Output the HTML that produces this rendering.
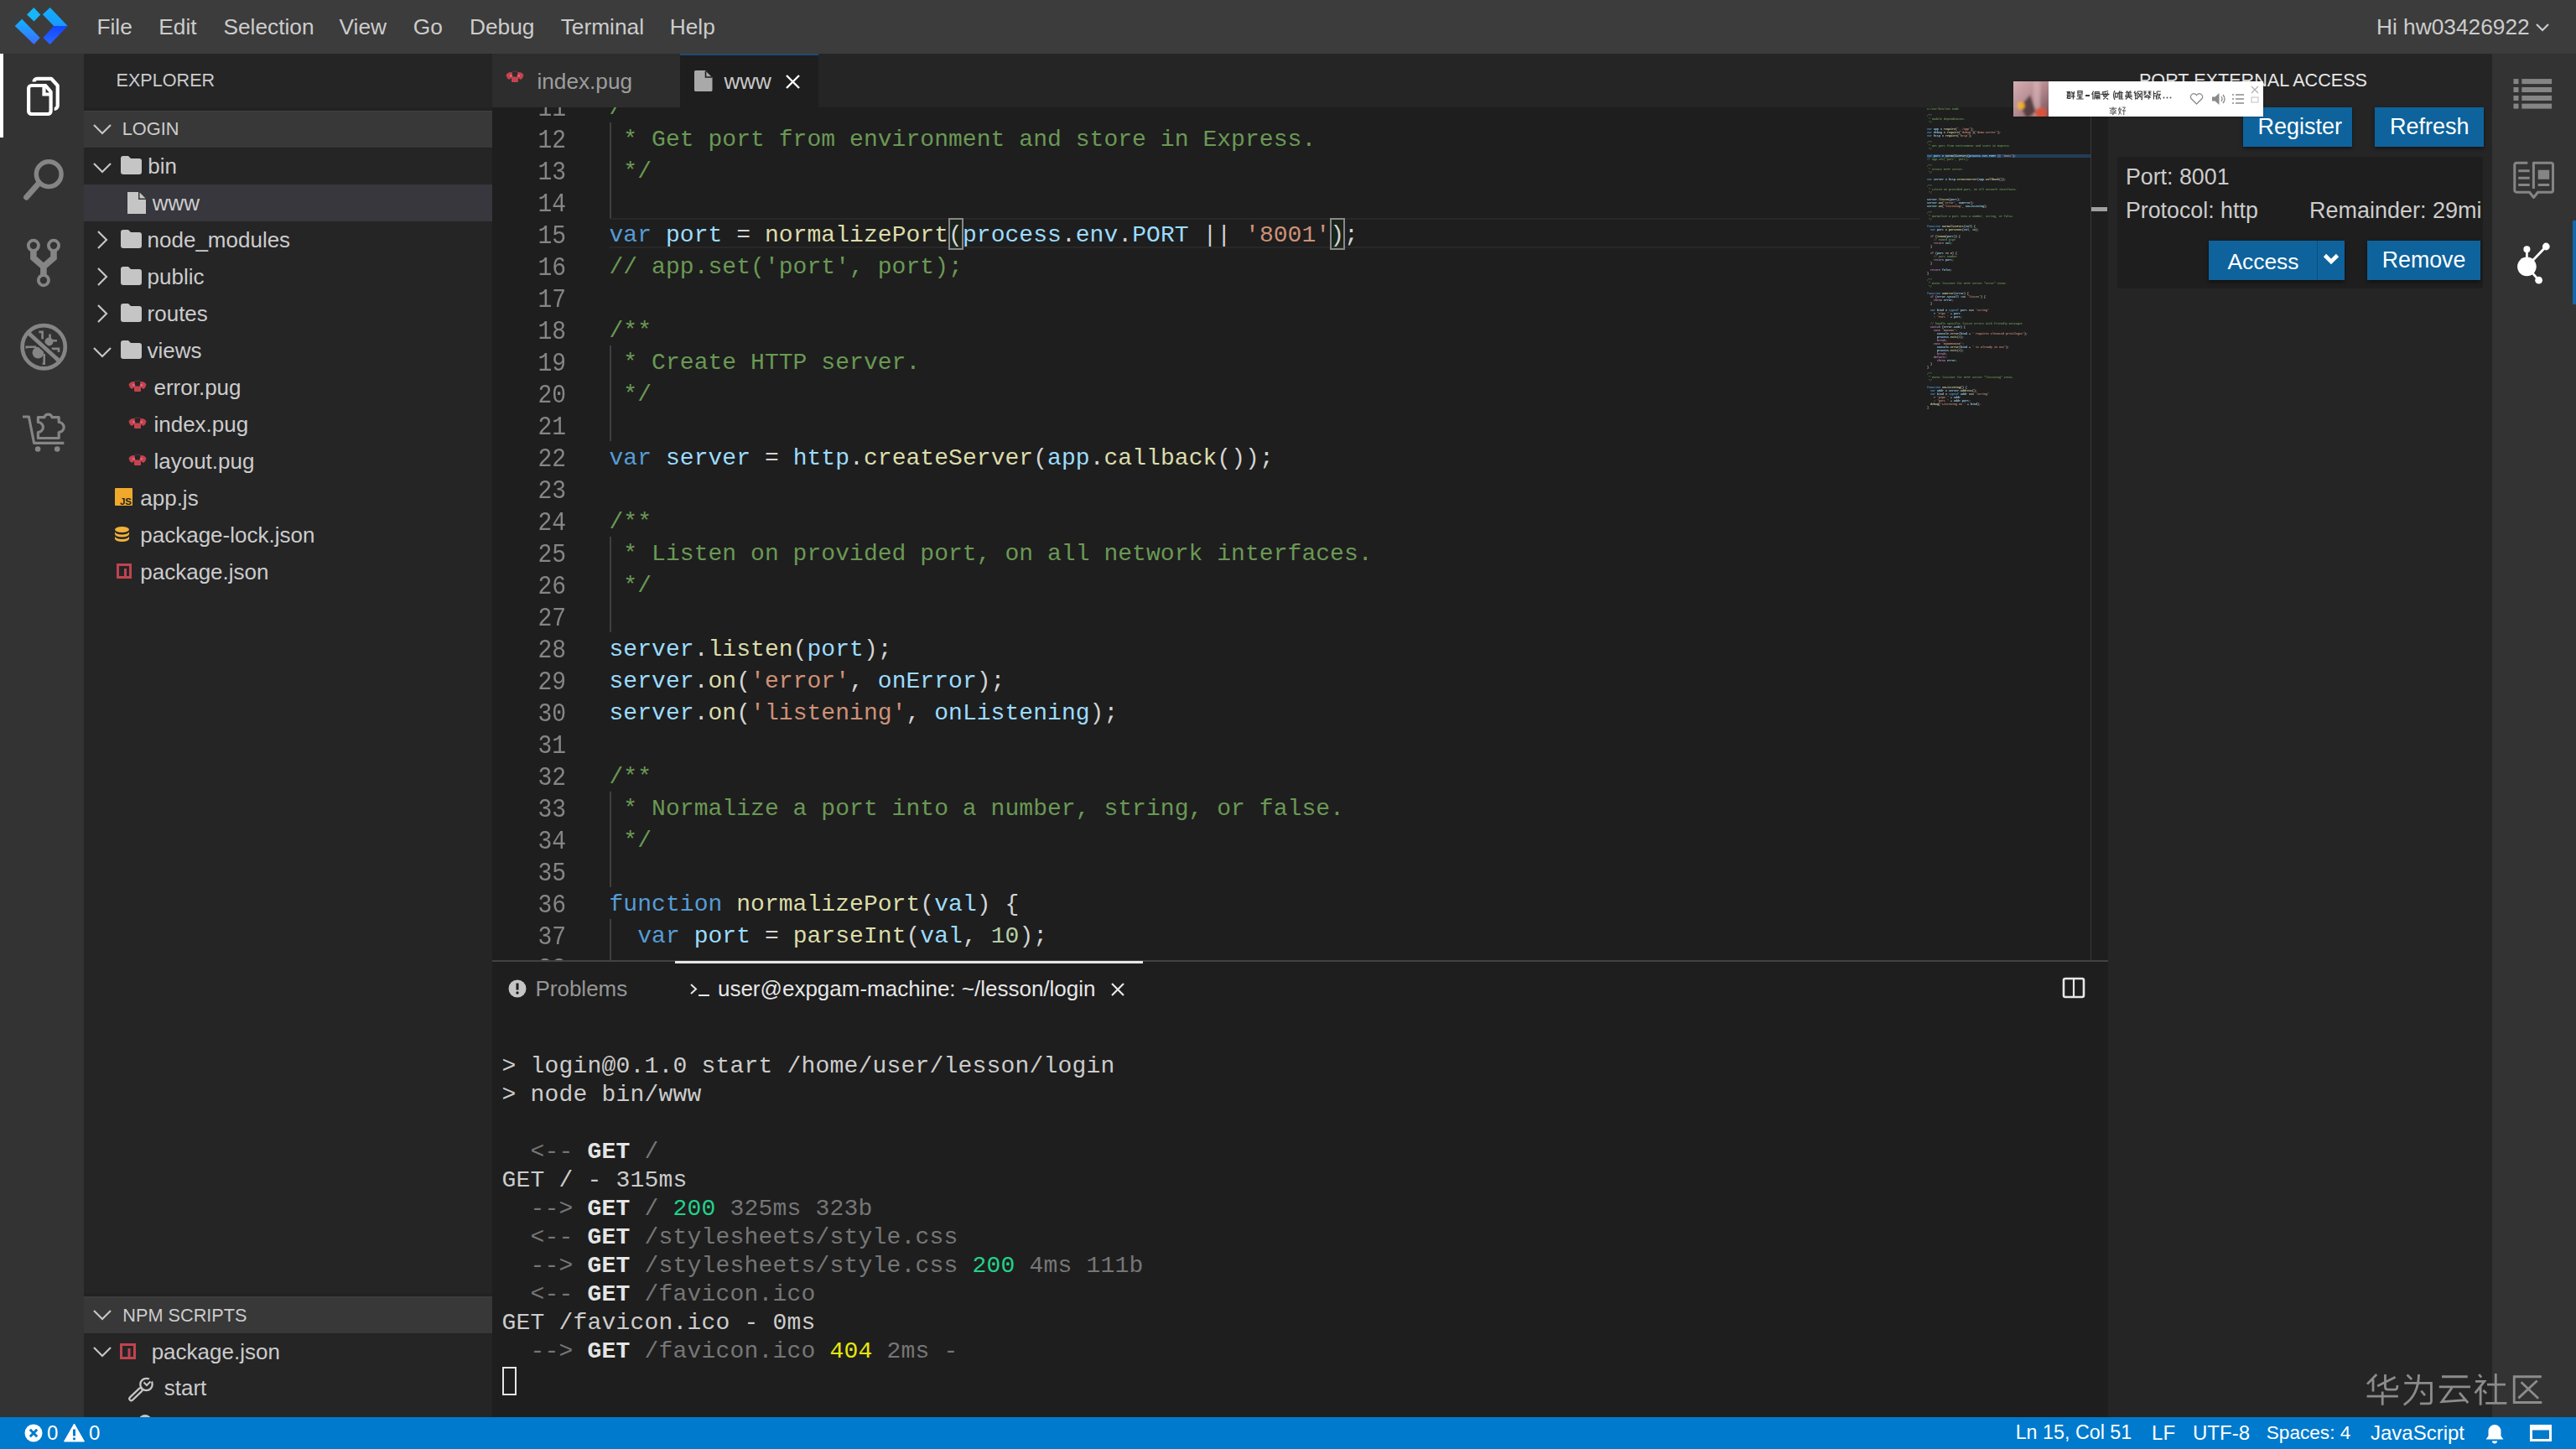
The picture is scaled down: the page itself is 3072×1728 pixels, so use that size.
<!DOCTYPE html><html><head><meta charset="utf-8"><style>
*{margin:0;padding:0;box-sizing:border-box}
html,body{width:3072px;height:1728px;overflow:hidden;background:#1e1e1e;font-family:"Liberation Sans",sans-serif}
.a{position:absolute}
.t{position:absolute;white-space:pre}
</style></head><body>
<div class="a" style="left:0px;top:0px;width:3072px;height:64px;background:#3c3c3c;"></div>
<div class="a" style="left:0px;top:64px;width:100px;height:1626px;background:#333333;"></div>
<div class="a" style="left:100px;top:64px;width:487px;height:1626px;background:#252526;"></div>
<div class="a" style="left:587px;top:64px;width:1927px;height:64px;background:#252526;"></div>
<div class="a" style="left:587px;top:128px;width:1927px;height:1017px;background:#1e1e1e;"></div>
<div class="a" style="left:587px;top:1145px;width:1927px;height:545px;background:#1e1e1e;"></div>
<div class="a" style="left:587px;top:1145px;width:1927px;height:2px;background:#414141;"></div>
<div class="a" style="left:2514px;top:64px;width:458px;height:1626px;background:#252526;"></div>
<div class="a" style="left:2972px;top:64px;width:100px;height:1626px;background:#333333;"></div>
<div class="a" style="left:0px;top:1690px;width:3072px;height:38px;background:#007acc;"></div>
<svg class="a" style="left:10px;top:4px;" width="80" height="56" viewBox="0 0 80 56">
<defs>
<linearGradient id="lg1" x1="0" y1="0" x2="0" y2="1"><stop offset="0" stop-color="#10b4ff"/><stop offset="1" stop-color="#3d6bff"/></linearGradient>
<linearGradient id="lg2" x1="0" y1="0" x2="0" y2="1"><stop offset="0" stop-color="#12b0ff"/><stop offset="0.5" stop-color="#1898ff"/><stop offset="0.5" stop-color="#1246ff"/><stop offset="1" stop-color="#2a68ff"/></linearGradient>
</defs>
<path d="M30.3 5 L38.3 13.4 L30.5 21.4 L22 13.5 Z" fill="#17b6fa"/>
<path d="M16.2 18.7 L7.7 27.1 L30.5 49.1 L37.7 41 Z" fill="url(#lg1)"/>
<path d="M49.7 5 L40.8 13.3 L54.1 27.1 L41.4 41 L49.5 49.1 L70.7 27.1 Z" fill="url(#lg2)"/>
</svg>
<div class="t" style="left:115.45px;top:19.24px;font-size:26.3px;line-height:26.3px;color:#cccccc;font-family:'Liberation Sans',sans-serif;">File</div>
<div class="t" style="left:189.25px;top:19.24px;font-size:26.3px;line-height:26.3px;color:#cccccc;font-family:'Liberation Sans',sans-serif;">Edit</div>
<div class="t" style="left:266.45px;top:19.24px;font-size:26.3px;line-height:26.3px;color:#cccccc;font-family:'Liberation Sans',sans-serif;">Selection</div>
<div class="t" style="left:404.55px;top:19.24px;font-size:26.3px;line-height:26.3px;color:#cccccc;font-family:'Liberation Sans',sans-serif;">View</div>
<div class="t" style="left:492.85px;top:19.24px;font-size:26.3px;line-height:26.3px;color:#cccccc;font-family:'Liberation Sans',sans-serif;">Go</div>
<div class="t" style="left:559.95px;top:19.24px;font-size:26.3px;line-height:26.3px;color:#cccccc;font-family:'Liberation Sans',sans-serif;">Debug</div>
<div class="t" style="left:668.65px;top:19.24px;font-size:26.3px;line-height:26.3px;color:#cccccc;font-family:'Liberation Sans',sans-serif;">Terminal</div>
<div class="t" style="left:798.75px;top:19.24px;font-size:26.3px;line-height:26.3px;color:#cccccc;font-family:'Liberation Sans',sans-serif;">Help</div>
<div class="t" style="left:2833.95px;top:19.24px;font-size:26.3px;line-height:26.3px;color:#cccccc;font-family:'Liberation Sans',sans-serif;">Hi hw03426922</div>
<svg class="a" style="left:3023px;top:26.5px;" width="18" height="12" viewBox="0 0 18 12"><path d="M2 2 L9 9 L16 2" stroke="#cccccc" stroke-width="2.2" fill="none"/></svg>
<div class="a" style="left:0px;top:64px;width:4px;height:100px;background:#ffffff;"></div>
<svg class="a" style="left:0px;top:64px;" width="100" height="500" viewBox="0 0 100 500"><g transform="translate(0,-64)">
<path d="M40.5 97.5 a3.7 3.7 0 0 1 3.7 -3.7 H61.1 L68.7 102 V126 a4 4 0 0 1 -4 4" stroke="#fff" stroke-width="4.2" fill="none" stroke-linejoin="round"/>
<path d="M54.3 102 H37.6 a3.5 3.5 0 0 0 -3.5 3.5 V132.5 a3.5 3.5 0 0 0 3.5 3.5 H57.1 a3.5 3.5 0 0 0 3.5 -3.5 V109.5 Z" stroke="#fff" stroke-width="4.2" fill="none" stroke-linejoin="round"/>
<path d="M52.5 103 V112.5 H59.5" stroke="#fff" stroke-width="4.2" fill="none"/>
<circle cx="58.2" cy="207.7" r="14.9" stroke="#858585" stroke-width="5.4" fill="none"/>
<path d="M45.4 219.5 L31.5 235.3" stroke="#858585" stroke-width="6.8" stroke-linecap="round"/>
<circle cx="39.9" cy="292.8" r="6.1" stroke="#858585" stroke-width="3.8" fill="none"/>
<circle cx="64" cy="292.8" r="6.1" stroke="#858585" stroke-width="3.8" fill="none"/>
<circle cx="51.9" cy="334.2" r="6.1" stroke="#858585" stroke-width="3.8" fill="none"/>
<path d="M39.9 298 V307.5 L51.9 318 L64 307.5 V298 M51.9 316 V329" stroke="#858585" stroke-width="7.6" fill="none" stroke-linejoin="miter"/>
<circle cx="52.2" cy="413.8" r="25.6" stroke="#858585" stroke-width="4.7" fill="none"/>
<path d="M33.8 397 L69.5 429.5" stroke="#858585" stroke-width="4.7"/>
<g transform="translate(16,376)">
<circle cx="29.4" cy="44.6" r="6.8" fill="#858585"/>
<circle cx="42.5" cy="31.5" r="5" fill="#858585"/>
<path d="M30.4 19.9 H34.6 V28.3 M43.5 22.5 V28.3 M45.6 30.2 H51.9 M45.6 39.9 H54 V44 M15.7 39.5 V37.8 H27.3 M36.7 46.1 V57.7 H34.6" stroke="#858585" stroke-width="2.6" fill="none"/>
<path d="M20.5 23.5 L51 51" stroke="#333333" stroke-width="9"/>
<path d="M17.8 21 L53.5 53.5" stroke="#858585" stroke-width="4.7"/>
</g>
<g transform="translate(16,476)">
<path d="M11 21 H18.4 L24.6 52.4 H60.3" stroke="#858585" stroke-width="3.1" fill="none" stroke-linejoin="round"/>
<circle cx="29.1" cy="59.5" r="3.3" fill="#858585"/>
<circle cx="52.2" cy="59.5" r="3.3" fill="#858585"/>
<path d="M29.4 21.7 H37 A4.6 4.6 0 0 1 46 21.7 H54.2 V27.5 A6 6 0 0 1 54.2 39.5 V46.5 H29.4 V39.5 A6 6 0 0 0 29.4 27.5 Z" stroke="#858585" stroke-width="3.2" fill="none" stroke-linejoin="round"/>
</g>
</g></svg>
<div class="t" style="left:138.54px;top:84.92px;font-size:21.6px;line-height:21.6px;color:#cccccc;font-family:'Liberation Sans',sans-serif;">EXPLORER</div>
<div class="a" style="left:100px;top:128px;width:487px;height:4px;background:#222222;"></div>
<div class="a" style="left:100px;top:132px;width:487px;height:44px;background:#383838;"></div>
<div class="a" style="left:100px;top:132px;width:487px;height:2px;background:#3c3c3c;"></div>
<div class="a" style="left:100px;top:176px;width:487px;height:1px;background:#222222;"></div>
<svg class="a" style="left:110px;top:146px;" width="24" height="16" viewBox="0 0 24 16"><path d="M2 3 L12 13 L22 3" stroke="#c5c5c5" stroke-width="2.2" fill="none"/></svg>
<div class="t" style="left:145.73px;top:142.95px;font-size:21.8px;line-height:21.8px;color:#cccccc;font-family:'Liberation Sans',sans-serif;">LOGIN</div>
<svg class="a" style="left:110px;top:192px;" width="24" height="16" viewBox="0 0 24 16"><path d="M2 3 L12 13 L22 3" stroke="#c5c5c5" stroke-width="2.2" fill="none"/></svg>
<svg class="a" style="left:144px;top:186px;" width="25" height="22" viewBox="0 0 25 22"><path d="M0 3 a3 3 0 0 1 3 -3 h6 l3 3 h10 a3 3 0 0 1 3 3 v13 a3 3 0 0 1 -3 3 h-19 a3 3 0 0 1 -3 -3 z" fill="#c5c5c5"/></svg>
<div class="t" style="left:176.36px;top:184.79px;font-size:26px;line-height:26px;color:#cccccc;font-family:'Liberation Sans',sans-serif;">bin</div>
<div class="a" style="left:100px;top:220px;width:487px;height:44px;background:#37373d;"></div>
<svg class="a" style="left:152px;top:229px;" width="22" height="26" viewBox="0 0 22 26"><path d="M0 0 H13 V9 H22 V26 H0 Z" fill="#c5c5c5"/><path d="M14.5 0.5 L21.5 7.5 H14.5 Z" fill="#c5c5c5"/></svg>
<div class="t" style="left:181.66px;top:228.79px;font-size:26px;line-height:26px;color:#cccccc;font-family:'Liberation Sans',sans-serif;">www</div>
<svg class="a" style="left:114px;top:274px;" width="16" height="24" viewBox="0 0 16 24"><path d="M3 2 L13 12 L3 22" stroke="#c5c5c5" stroke-width="2.2" fill="none"/></svg>
<svg class="a" style="left:144px;top:274px;" width="25" height="22" viewBox="0 0 25 22"><path d="M0 3 a3 3 0 0 1 3 -3 h6 l3 3 h10 a3 3 0 0 1 3 3 v13 a3 3 0 0 1 -3 3 h-19 a3 3 0 0 1 -3 -3 z" fill="#c5c5c5"/></svg>
<div class="t" style="left:175.56px;top:272.79px;font-size:26px;line-height:26px;color:#cccccc;font-family:'Liberation Sans',sans-serif;">node_modules</div>
<svg class="a" style="left:114px;top:318px;" width="16" height="24" viewBox="0 0 16 24"><path d="M3 2 L13 12 L3 22" stroke="#c5c5c5" stroke-width="2.2" fill="none"/></svg>
<svg class="a" style="left:144px;top:318px;" width="25" height="22" viewBox="0 0 25 22"><path d="M0 3 a3 3 0 0 1 3 -3 h6 l3 3 h10 a3 3 0 0 1 3 3 v13 a3 3 0 0 1 -3 3 h-19 a3 3 0 0 1 -3 -3 z" fill="#c5c5c5"/></svg>
<div class="t" style="left:175.56px;top:316.79px;font-size:26px;line-height:26px;color:#cccccc;font-family:'Liberation Sans',sans-serif;">public</div>
<svg class="a" style="left:114px;top:362px;" width="16" height="24" viewBox="0 0 16 24"><path d="M3 2 L13 12 L3 22" stroke="#c5c5c5" stroke-width="2.2" fill="none"/></svg>
<svg class="a" style="left:144px;top:362px;" width="25" height="22" viewBox="0 0 25 22"><path d="M0 3 a3 3 0 0 1 3 -3 h6 l3 3 h10 a3 3 0 0 1 3 3 v13 a3 3 0 0 1 -3 3 h-19 a3 3 0 0 1 -3 -3 z" fill="#c5c5c5"/></svg>
<div class="t" style="left:175.56px;top:360.79px;font-size:26px;line-height:26px;color:#cccccc;font-family:'Liberation Sans',sans-serif;">routes</div>
<svg class="a" style="left:110px;top:412px;" width="24" height="16" viewBox="0 0 24 16"><path d="M2 3 L12 13 L22 3" stroke="#c5c5c5" stroke-width="2.2" fill="none"/></svg>
<svg class="a" style="left:144px;top:406px;" width="25" height="22" viewBox="0 0 25 22"><path d="M0 3 a3 3 0 0 1 3 -3 h6 l3 3 h10 a3 3 0 0 1 3 3 v13 a3 3 0 0 1 -3 3 h-19 a3 3 0 0 1 -3 -3 z" fill="#c5c5c5"/></svg>
<div class="t" style="left:175.56px;top:404.79px;font-size:26px;line-height:26px;color:#cccccc;font-family:'Liberation Sans',sans-serif;">views</div>
<svg class="a" style="left:148px;top:448px;" width="32" height="24" viewBox="0 0 32 24"><g fill="#c5434f"><path d="M5.5 10.5 Q7.5 6.5 12.5 7 L13.5 13 L9 16 Q6 14 5.5 10.5 Z"/><path d="M26.5 10.5 Q24.5 6.5 19.5 7 L18.5 13 L23 16 Q26 14 26.5 10.5 Z"/><rect x="12" y="12.5" width="8" height="6.5" rx="1"/><path d="M12.5 6.2 H19.5" stroke="#c5434f" stroke-width="0.8" opacity="0.5"/></g>
<circle cx="11.3" cy="11.3" r="1.3" fill="#e07080"/><circle cx="20.7" cy="11.3" r="1.3" fill="#e07080"/></svg>
<div class="t" style="left:183.46px;top:448.79px;font-size:26px;line-height:26px;color:#cccccc;font-family:'Liberation Sans',sans-serif;">error.pug</div>
<svg class="a" style="left:148px;top:492px;" width="32" height="24" viewBox="0 0 32 24"><g fill="#c5434f"><path d="M5.5 10.5 Q7.5 6.5 12.5 7 L13.5 13 L9 16 Q6 14 5.5 10.5 Z"/><path d="M26.5 10.5 Q24.5 6.5 19.5 7 L18.5 13 L23 16 Q26 14 26.5 10.5 Z"/><rect x="12" y="12.5" width="8" height="6.5" rx="1"/><path d="M12.5 6.2 H19.5" stroke="#c5434f" stroke-width="0.8" opacity="0.5"/></g>
<circle cx="11.3" cy="11.3" r="1.3" fill="#e07080"/><circle cx="20.7" cy="11.3" r="1.3" fill="#e07080"/></svg>
<div class="t" style="left:183.46px;top:492.79px;font-size:26px;line-height:26px;color:#cccccc;font-family:'Liberation Sans',sans-serif;">index.pug</div>
<svg class="a" style="left:148px;top:536px;" width="32" height="24" viewBox="0 0 32 24"><g fill="#c5434f"><path d="M5.5 10.5 Q7.5 6.5 12.5 7 L13.5 13 L9 16 Q6 14 5.5 10.5 Z"/><path d="M26.5 10.5 Q24.5 6.5 19.5 7 L18.5 13 L23 16 Q26 14 26.5 10.5 Z"/><rect x="12" y="12.5" width="8" height="6.5" rx="1"/><path d="M12.5 6.2 H19.5" stroke="#c5434f" stroke-width="0.8" opacity="0.5"/></g>
<circle cx="11.3" cy="11.3" r="1.3" fill="#e07080"/><circle cx="20.7" cy="11.3" r="1.3" fill="#e07080"/></svg>
<div class="t" style="left:183.46px;top:536.79px;font-size:26px;line-height:26px;color:#cccccc;font-family:'Liberation Sans',sans-serif;">layout.pug</div>
<svg class="a" style="left:137px;top:582px;" width="22" height="22" viewBox="0 0 22 22"><rect width="21" height="21" rx="1" fill="#f1a92c"/><text x="20" y="19.5" font-family="Liberation Sans" font-size="11.5" font-weight="bold" fill="#1f1f1f" text-anchor="end">JS</text></svg>
<div class="t" style="left:167.26px;top:580.79px;font-size:26px;line-height:26px;color:#cccccc;font-family:'Liberation Sans',sans-serif;">app.js</div>
<svg class="a" style="left:137px;top:628px;" width="17" height="20" viewBox="0 0 17 20"><ellipse cx="8.5" cy="3.5" rx="8.5" ry="3.5" fill="#f0b23b"/><path d="M0 6 v3 a8.5 3.5 0 0 0 17 0 v-3 a8.5 3.5 0 0 1 -17 0z M0 11.5 v3 a8.5 3.5 0 0 0 17 0 v-3 a8.5 3.5 0 0 1 -17 0z" fill="#f0b23b"/></svg>
<div class="t" style="left:167.26px;top:624.79px;font-size:26px;line-height:26px;color:#cccccc;font-family:'Liberation Sans',sans-serif;">package-lock.json</div>
<svg class="a" style="left:139px;top:672px;" width="18" height="18" viewBox="0 0 18 18"><path d="M0 0 h18 v18 h-18z M3 3 v12 h6 v-9 h3 v9 h3 v-12z" fill="#c0434f" fill-rule="evenodd"/></svg>
<div class="t" style="left:167.26px;top:668.79px;font-size:26px;line-height:26px;color:#cccccc;font-family:'Liberation Sans',sans-serif;">package.json</div>
<div class="a" style="left:100px;top:1542px;width:487px;height:4px;background:#222222;"></div>
<div class="a" style="left:100px;top:1546px;width:487px;height:44px;background:#383838;"></div>
<div class="a" style="left:100px;top:1546px;width:487px;height:2px;background:#3c3c3c;"></div>
<div class="a" style="left:100px;top:1590px;width:487px;height:1px;background:#222222;"></div>
<svg class="a" style="left:110px;top:1560px;" width="24" height="16" viewBox="0 0 24 16"><path d="M2 3 L12 13 L22 3" stroke="#c5c5c5" stroke-width="2.2" fill="none"/></svg>
<div class="t" style="left:146.33px;top:1557.63px;font-size:21.7px;line-height:21.7px;color:#cccccc;font-family:'Liberation Sans',sans-serif;">NPM SCRIPTS</div>
<svg class="a" style="left:110px;top:1604px;" width="24" height="16" viewBox="0 0 24 16"><path d="M2 3 L12 13 L22 3" stroke="#c5c5c5" stroke-width="2.2" fill="none"/></svg>
<svg class="a" style="left:143px;top:1602px;" width="19" height="19" viewBox="0 0 19 19"><path d="M0 0 h19 v19 h-19z M3 3 v13 h6.5 v-10 h3 v10 h3.5 v-13z" fill="#c0434f" fill-rule="evenodd"/></svg>
<div class="t" style="left:180.66px;top:1598.99px;font-size:26px;line-height:26px;color:#cccccc;font-family:'Liberation Sans',sans-serif;">package.json</div>
<svg class="a" style="left:150px;top:1638px;" width="34" height="36" viewBox="0 0 34 36"><g transform="translate(-150,-1638)">
<path d="M167.5 1657.5 L156.5 1668" stroke="#c5c5c5" stroke-width="6.6" stroke-linecap="round"/>
<path d="M167.5 1657.5 L156.5 1668" stroke="#252526" stroke-width="2.2" stroke-linecap="round"/>
<circle cx="174.5" cy="1651" r="7.2" stroke="#c5c5c5" stroke-width="2.3" fill="#252526"/>
<path d="M174.5 1651 L183 1642.5" stroke="#252526" stroke-width="4.2"/>
<path d="M171.5 1648.5 L175 1652 L179.5 1647.5" stroke="#c5c5c5" stroke-width="2" fill="none"/>
</g></svg>
<div class="t" style="left:195.76px;top:1641.99px;font-size:26px;line-height:26px;color:#cccccc;font-family:'Liberation Sans',sans-serif;">start</div>
<svg class="a" style="left:160px;top:1684px;" width="30" height="6" viewBox="0 0 30 6"><circle cx="13" cy="11" r="8" fill="#c5c5c5"/></svg>
<div class="a" style="left:587px;top:64px;width:224px;height:64px;background:#2d2d2d;"></div>
<div class="a" style="left:811px;top:64px;width:165px;height:64px;background:#1e1e1e;"></div>
<div class="a" style="left:811px;top:64px;width:165px;height:2px;background:#1e4b72;"></div>
<svg class="a" style="left:598px;top:79px;" width="32" height="24" viewBox="0 0 32 24"><g fill="#c5434f"><path d="M5.5 10.5 Q7.5 6.5 12.5 7 L13.5 13 L9 16 Q6 14 5.5 10.5 Z"/><path d="M26.5 10.5 Q24.5 6.5 19.5 7 L18.5 13 L23 16 Q26 14 26.5 10.5 Z"/><rect x="12" y="12.5" width="8" height="6.5" rx="1"/><path d="M12.5 6.2 H19.5" stroke="#c5434f" stroke-width="0.8" opacity="0.5"/></g>
<circle cx="11.3" cy="11.3" r="1.3" fill="#e07080"/><circle cx="20.7" cy="11.3" r="1.3" fill="#e07080"/></svg>
<div class="t" style="left:640.45px;top:83.82px;font-size:26.2px;line-height:26.2px;color:#9d9d9d;font-family:'Liberation Sans',sans-serif;">index.pug</div>
<svg class="a" style="left:828px;top:84px;" width="22" height="25" viewBox="0 0 22 25"><path d="M0 1.5 a1.5 1.5 0 0 1 1.5 -1.5 H13 L21.5 8.5 V23.5 a1.5 1.5 0 0 1 -1.5 1.5 H1.5 a1.5 1.5 0 0 1 -1.5 -1.5 Z" fill="#a9a9a9"/><path d="M13.5 1 V8 H21" stroke="#1e1e1e" stroke-width="1.6" fill="none"/></svg>
<div class="t" style="left:863.46px;top:83.59px;font-size:26px;line-height:26px;color:#c8c8c8;font-family:'Liberation Sans',sans-serif;">www</div>
<svg class="a" style="left:936px;top:88px;" width="19" height="19" viewBox="0 0 19 19"><path d="M2 2 L17 17 M17 2 L2 17" stroke="#ffffff" stroke-width="2.4"/></svg>
<div class="a" style="left:587px;top:128px;width:1907px;height:1017px;overflow:hidden">
<div class="a" style="left:140px;top:132px;width:1563px;height:36px;border-top:2px solid #282828;border-bottom:2px solid #282828"></div>
<div class="a" style="left:140px;top:18px;width:2px;height:38px;background:#404040"></div>
<div class="a" style="left:140px;top:56px;width:2px;height:38px;background:#404040"></div>
<div class="a" style="left:140px;top:94px;width:2px;height:38px;background:#404040"></div>
<div class="a" style="left:140px;top:284px;width:2px;height:38px;background:#404040"></div>
<div class="a" style="left:140px;top:322px;width:2px;height:38px;background:#404040"></div>
<div class="a" style="left:140px;top:360px;width:2px;height:38px;background:#404040"></div>
<div class="a" style="left:140px;top:512px;width:2px;height:38px;background:#404040"></div>
<div class="a" style="left:140px;top:550px;width:2px;height:38px;background:#404040"></div>
<div class="a" style="left:140px;top:588px;width:2px;height:38px;background:#404040"></div>
<div class="a" style="left:140px;top:816px;width:2px;height:38px;background:#404040"></div>
<div class="a" style="left:140px;top:854px;width:2px;height:38px;background:#404040"></div>
<div class="a" style="left:140px;top:892px;width:2px;height:38px;background:#404040"></div>
<div class="a" style="left:140px;top:968px;width:2px;height:38px;background:#404040"></div>
<div class="a" style="left:140px;top:1006px;width:2px;height:38px;background:#404040"></div>
<div class="a" style="left:544.0px;top:132px;width:18px;height:38px;border:2px solid #888888;background:rgba(0,100,0,0.1)"></div>
<div class="a" style="left:999.1px;top:132px;width:18px;height:38px;border:2px solid #888888;background:rgba(0,100,0,0.1)"></div>
<div class="t" style="left:13px;width:75px;text-align:right;top:-10.95px;font:28px/28px 'Liberation Mono',monospace;color:#858585;transform:scaleY(1.14);transform-origin:50% 21.45px">11</div>
<div class="t" style="left:139.5px;top:-12.95px;font:28px/28px 'Liberation Mono',monospace;letter-spacing:0.052px"><span style="color:#6a9955">/**</span></div>
<div class="t" style="left:13px;width:75px;text-align:right;top:27.05px;font:28px/28px 'Liberation Mono',monospace;color:#858585;transform:scaleY(1.14);transform-origin:50% 21.45px">12</div>
<div class="t" style="left:139.5px;top:25.05px;font:28px/28px 'Liberation Mono',monospace;letter-spacing:0.052px"><span style="color:#6a9955"> * Get port from environment and store in Express.</span></div>
<div class="t" style="left:13px;width:75px;text-align:right;top:65.05px;font:28px/28px 'Liberation Mono',monospace;color:#858585;transform:scaleY(1.14);transform-origin:50% 21.45px">13</div>
<div class="t" style="left:139.5px;top:63.05px;font:28px/28px 'Liberation Mono',monospace;letter-spacing:0.052px"><span style="color:#6a9955"> */</span></div>
<div class="t" style="left:13px;width:75px;text-align:right;top:103.05px;font:28px/28px 'Liberation Mono',monospace;color:#858585;transform:scaleY(1.14);transform-origin:50% 21.45px">14</div>
<div class="t" style="left:13px;width:75px;text-align:right;top:141.05px;font:28px/28px 'Liberation Mono',monospace;color:#858585;transform:scaleY(1.14);transform-origin:50% 21.45px">15</div>
<div class="t" style="left:139.5px;top:139.05px;font:28px/28px 'Liberation Mono',monospace;letter-spacing:0.052px"><span style="color:#569cd6">var</span><span style="color:#d4d4d4"> </span><span style="color:#9cdcfe">port</span><span style="color:#d4d4d4"> = </span><span style="color:#dcdcaa">normalizePort</span><span style="color:#d4d4d4">(</span><span style="color:#9cdcfe">process</span><span style="color:#d4d4d4">.</span><span style="color:#9cdcfe">env</span><span style="color:#d4d4d4">.</span><span style="color:#9cdcfe">PORT</span><span style="color:#d4d4d4"> || </span><span style="color:#ce9178">&#x27;8001&#x27;</span><span style="color:#d4d4d4">);</span></div>
<div class="t" style="left:13px;width:75px;text-align:right;top:179.05px;font:28px/28px 'Liberation Mono',monospace;color:#858585;transform:scaleY(1.14);transform-origin:50% 21.45px">16</div>
<div class="t" style="left:139.5px;top:177.05px;font:28px/28px 'Liberation Mono',monospace;letter-spacing:0.052px"><span style="color:#6a9955">// app.set(&#x27;port&#x27;, port);</span></div>
<div class="t" style="left:13px;width:75px;text-align:right;top:217.05px;font:28px/28px 'Liberation Mono',monospace;color:#858585;transform:scaleY(1.14);transform-origin:50% 21.45px">17</div>
<div class="t" style="left:13px;width:75px;text-align:right;top:255.05px;font:28px/28px 'Liberation Mono',monospace;color:#858585;transform:scaleY(1.14);transform-origin:50% 21.45px">18</div>
<div class="t" style="left:139.5px;top:253.05px;font:28px/28px 'Liberation Mono',monospace;letter-spacing:0.052px"><span style="color:#6a9955">/**</span></div>
<div class="t" style="left:13px;width:75px;text-align:right;top:293.05px;font:28px/28px 'Liberation Mono',monospace;color:#858585;transform:scaleY(1.14);transform-origin:50% 21.45px">19</div>
<div class="t" style="left:139.5px;top:291.05px;font:28px/28px 'Liberation Mono',monospace;letter-spacing:0.052px"><span style="color:#6a9955"> * Create HTTP server.</span></div>
<div class="t" style="left:13px;width:75px;text-align:right;top:331.05px;font:28px/28px 'Liberation Mono',monospace;color:#858585;transform:scaleY(1.14);transform-origin:50% 21.45px">20</div>
<div class="t" style="left:139.5px;top:329.05px;font:28px/28px 'Liberation Mono',monospace;letter-spacing:0.052px"><span style="color:#6a9955"> */</span></div>
<div class="t" style="left:13px;width:75px;text-align:right;top:369.05px;font:28px/28px 'Liberation Mono',monospace;color:#858585;transform:scaleY(1.14);transform-origin:50% 21.45px">21</div>
<div class="t" style="left:13px;width:75px;text-align:right;top:407.05px;font:28px/28px 'Liberation Mono',monospace;color:#858585;transform:scaleY(1.14);transform-origin:50% 21.45px">22</div>
<div class="t" style="left:139.5px;top:405.05px;font:28px/28px 'Liberation Mono',monospace;letter-spacing:0.052px"><span style="color:#569cd6">var</span><span style="color:#d4d4d4"> </span><span style="color:#9cdcfe">server</span><span style="color:#d4d4d4"> = </span><span style="color:#9cdcfe">http</span><span style="color:#d4d4d4">.</span><span style="color:#dcdcaa">createServer</span><span style="color:#d4d4d4">(</span><span style="color:#9cdcfe">app</span><span style="color:#d4d4d4">.</span><span style="color:#dcdcaa">callback</span><span style="color:#d4d4d4">());</span></div>
<div class="t" style="left:13px;width:75px;text-align:right;top:445.05px;font:28px/28px 'Liberation Mono',monospace;color:#858585;transform:scaleY(1.14);transform-origin:50% 21.45px">23</div>
<div class="t" style="left:13px;width:75px;text-align:right;top:483.05px;font:28px/28px 'Liberation Mono',monospace;color:#858585;transform:scaleY(1.14);transform-origin:50% 21.45px">24</div>
<div class="t" style="left:139.5px;top:481.05px;font:28px/28px 'Liberation Mono',monospace;letter-spacing:0.052px"><span style="color:#6a9955">/**</span></div>
<div class="t" style="left:13px;width:75px;text-align:right;top:521.05px;font:28px/28px 'Liberation Mono',monospace;color:#858585;transform:scaleY(1.14);transform-origin:50% 21.45px">25</div>
<div class="t" style="left:139.5px;top:519.05px;font:28px/28px 'Liberation Mono',monospace;letter-spacing:0.052px"><span style="color:#6a9955"> * Listen on provided port, on all network interfaces.</span></div>
<div class="t" style="left:13px;width:75px;text-align:right;top:559.05px;font:28px/28px 'Liberation Mono',monospace;color:#858585;transform:scaleY(1.14);transform-origin:50% 21.45px">26</div>
<div class="t" style="left:139.5px;top:557.05px;font:28px/28px 'Liberation Mono',monospace;letter-spacing:0.052px"><span style="color:#6a9955"> */</span></div>
<div class="t" style="left:13px;width:75px;text-align:right;top:597.05px;font:28px/28px 'Liberation Mono',monospace;color:#858585;transform:scaleY(1.14);transform-origin:50% 21.45px">27</div>
<div class="t" style="left:13px;width:75px;text-align:right;top:635.05px;font:28px/28px 'Liberation Mono',monospace;color:#858585;transform:scaleY(1.14);transform-origin:50% 21.45px">28</div>
<div class="t" style="left:139.5px;top:633.05px;font:28px/28px 'Liberation Mono',monospace;letter-spacing:0.052px"><span style="color:#9cdcfe">server</span><span style="color:#d4d4d4">.</span><span style="color:#dcdcaa">listen</span><span style="color:#d4d4d4">(</span><span style="color:#9cdcfe">port</span><span style="color:#d4d4d4">);</span></div>
<div class="t" style="left:13px;width:75px;text-align:right;top:673.05px;font:28px/28px 'Liberation Mono',monospace;color:#858585;transform:scaleY(1.14);transform-origin:50% 21.45px">29</div>
<div class="t" style="left:139.5px;top:671.05px;font:28px/28px 'Liberation Mono',monospace;letter-spacing:0.052px"><span style="color:#9cdcfe">server</span><span style="color:#d4d4d4">.</span><span style="color:#dcdcaa">on</span><span style="color:#d4d4d4">(</span><span style="color:#ce9178">&#x27;error&#x27;</span><span style="color:#d4d4d4">, </span><span style="color:#9cdcfe">onError</span><span style="color:#d4d4d4">);</span></div>
<div class="t" style="left:13px;width:75px;text-align:right;top:711.05px;font:28px/28px 'Liberation Mono',monospace;color:#858585;transform:scaleY(1.14);transform-origin:50% 21.45px">30</div>
<div class="t" style="left:139.5px;top:709.05px;font:28px/28px 'Liberation Mono',monospace;letter-spacing:0.052px"><span style="color:#9cdcfe">server</span><span style="color:#d4d4d4">.</span><span style="color:#dcdcaa">on</span><span style="color:#d4d4d4">(</span><span style="color:#ce9178">&#x27;listening&#x27;</span><span style="color:#d4d4d4">, </span><span style="color:#9cdcfe">onListening</span><span style="color:#d4d4d4">);</span></div>
<div class="t" style="left:13px;width:75px;text-align:right;top:749.05px;font:28px/28px 'Liberation Mono',monospace;color:#858585;transform:scaleY(1.14);transform-origin:50% 21.45px">31</div>
<div class="t" style="left:13px;width:75px;text-align:right;top:787.05px;font:28px/28px 'Liberation Mono',monospace;color:#858585;transform:scaleY(1.14);transform-origin:50% 21.45px">32</div>
<div class="t" style="left:139.5px;top:785.05px;font:28px/28px 'Liberation Mono',monospace;letter-spacing:0.052px"><span style="color:#6a9955">/**</span></div>
<div class="t" style="left:13px;width:75px;text-align:right;top:825.05px;font:28px/28px 'Liberation Mono',monospace;color:#858585;transform:scaleY(1.14);transform-origin:50% 21.45px">33</div>
<div class="t" style="left:139.5px;top:823.05px;font:28px/28px 'Liberation Mono',monospace;letter-spacing:0.052px"><span style="color:#6a9955"> * Normalize a port into a number, string, or false.</span></div>
<div class="t" style="left:13px;width:75px;text-align:right;top:863.05px;font:28px/28px 'Liberation Mono',monospace;color:#858585;transform:scaleY(1.14);transform-origin:50% 21.45px">34</div>
<div class="t" style="left:139.5px;top:861.05px;font:28px/28px 'Liberation Mono',monospace;letter-spacing:0.052px"><span style="color:#6a9955"> */</span></div>
<div class="t" style="left:13px;width:75px;text-align:right;top:901.05px;font:28px/28px 'Liberation Mono',monospace;color:#858585;transform:scaleY(1.14);transform-origin:50% 21.45px">35</div>
<div class="t" style="left:13px;width:75px;text-align:right;top:939.05px;font:28px/28px 'Liberation Mono',monospace;color:#858585;transform:scaleY(1.14);transform-origin:50% 21.45px">36</div>
<div class="t" style="left:139.5px;top:937.05px;font:28px/28px 'Liberation Mono',monospace;letter-spacing:0.052px"><span style="color:#569cd6">function</span><span style="color:#d4d4d4"> </span><span style="color:#dcdcaa">normalizePort</span><span style="color:#d4d4d4">(</span><span style="color:#9cdcfe">val</span><span style="color:#d4d4d4">) {</span></div>
<div class="t" style="left:13px;width:75px;text-align:right;top:977.05px;font:28px/28px 'Liberation Mono',monospace;color:#858585;transform:scaleY(1.14);transform-origin:50% 21.45px">37</div>
<div class="t" style="left:139.5px;top:975.05px;font:28px/28px 'Liberation Mono',monospace;letter-spacing:0.052px"><span style="color:#d4d4d4">  </span><span style="color:#569cd6">var</span><span style="color:#d4d4d4"> </span><span style="color:#9cdcfe">port</span><span style="color:#d4d4d4"> = </span><span style="color:#dcdcaa">parseInt</span><span style="color:#d4d4d4">(</span><span style="color:#9cdcfe">val</span><span style="color:#d4d4d4">, </span><span style="color:#b5cea8">10</span><span style="color:#d4d4d4">);</span></div>
<div class="t" style="left:13px;width:75px;text-align:right;top:1015.05px;font:28px/28px 'Liberation Mono',monospace;color:#858585;transform:scaleY(1.14);transform-origin:50% 21.45px">38</div>
</div>
<div class="a" style="left:2298px;top:184px;width:196px;height:4px;background:rgba(38,79,120,0.65);"></div>
<div class="a" style="left:2298px;top:128px;width:196px;height:370px;overflow:hidden">
<div class="t" style="left:0;top:-0.5px;font:bold 3.334px/4px 'Liberation Mono',monospace;opacity:0.9"><span style="color:#6a9955">#!/usr/bin/env node</span></div>
<div class="t" style="left:0;top:7.5px;font:bold 3.334px/4px 'Liberation Mono',monospace;opacity:0.9"><span style="color:#6a9955">/**</span></div>
<div class="t" style="left:0;top:11.5px;font:bold 3.334px/4px 'Liberation Mono',monospace;opacity:0.9"> <span style="color:#6a9955">* Module dependencies.</span></div>
<div class="t" style="left:0;top:15.5px;font:bold 3.334px/4px 'Liberation Mono',monospace;opacity:0.9"> <span style="color:#6a9955">*/</span></div>
<div class="t" style="left:0;top:23.5px;font:bold 3.334px/4px 'Liberation Mono',monospace;opacity:0.9"><span style="color:#569cd6">var</span> <span style="color:#9cdcfe">app</span> <span style="color:#d4d4d4">=</span> <span style="color:#dcdcaa">require</span><span style="color:#d4d4d4">(</span><span style="color:#ce9178">&#x27;../app&#x27;</span><span style="color:#d4d4d4">)</span><span style="color:#d4d4d4">;</span></div>
<div class="t" style="left:0;top:27.5px;font:bold 3.334px/4px 'Liberation Mono',monospace;opacity:0.9"><span style="color:#569cd6">var</span> <span style="color:#9cdcfe">debug</span> <span style="color:#d4d4d4">=</span> <span style="color:#dcdcaa">require</span><span style="color:#d4d4d4">(</span><span style="color:#ce9178">&#x27;debug&#x27;</span><span style="color:#d4d4d4">)</span><span style="color:#d4d4d4">(</span><span style="color:#ce9178">&#x27;demo:server&#x27;</span><span style="color:#d4d4d4">)</span><span style="color:#d4d4d4">;</span></div>
<div class="t" style="left:0;top:31.5px;font:bold 3.334px/4px 'Liberation Mono',monospace;opacity:0.9"><span style="color:#569cd6">var</span> <span style="color:#9cdcfe">http</span> <span style="color:#d4d4d4">=</span> <span style="color:#dcdcaa">require</span><span style="color:#d4d4d4">(</span><span style="color:#ce9178">&#x27;http&#x27;</span><span style="color:#d4d4d4">)</span><span style="color:#d4d4d4">;</span></div>
<div class="t" style="left:0;top:39.5px;font:bold 3.334px/4px 'Liberation Mono',monospace;opacity:0.9"><span style="color:#6a9955">/**</span></div>
<div class="t" style="left:0;top:43.5px;font:bold 3.334px/4px 'Liberation Mono',monospace;opacity:0.9"> <span style="color:#6a9955">* Get port from environment and store in Express.</span></div>
<div class="t" style="left:0;top:47.5px;font:bold 3.334px/4px 'Liberation Mono',monospace;opacity:0.9"> <span style="color:#6a9955">*/</span></div>
<div class="t" style="left:0;top:55.5px;font:bold 3.334px/4px 'Liberation Mono',monospace;opacity:0.9"><span style="color:#569cd6">var</span> <span style="color:#9cdcfe">port</span> <span style="color:#d4d4d4">=</span> <span style="color:#dcdcaa">normalizePort</span><span style="color:#d4d4d4">(</span><span style="color:#9cdcfe">process</span><span style="color:#d4d4d4">.</span><span style="color:#9cdcfe">env</span><span style="color:#d4d4d4">.</span><span style="color:#9cdcfe">PORT</span> <span style="color:#d4d4d4">|</span><span style="color:#d4d4d4">|</span> <span style="color:#ce9178">&#x27;8001&#x27;</span><span style="color:#d4d4d4">)</span><span style="color:#d4d4d4">;</span></div>
<div class="t" style="left:0;top:59.5px;font:bold 3.334px/4px 'Liberation Mono',monospace;opacity:0.9"><span style="color:#6a9955">// app.set(&#x27;port&#x27;, port);</span></div>
<div class="t" style="left:0;top:67.5px;font:bold 3.334px/4px 'Liberation Mono',monospace;opacity:0.9"><span style="color:#6a9955">/**</span></div>
<div class="t" style="left:0;top:71.5px;font:bold 3.334px/4px 'Liberation Mono',monospace;opacity:0.9"> <span style="color:#6a9955">* Create HTTP server.</span></div>
<div class="t" style="left:0;top:75.5px;font:bold 3.334px/4px 'Liberation Mono',monospace;opacity:0.9"> <span style="color:#6a9955">*/</span></div>
<div class="t" style="left:0;top:83.5px;font:bold 3.334px/4px 'Liberation Mono',monospace;opacity:0.9"><span style="color:#569cd6">var</span> <span style="color:#9cdcfe">server</span> <span style="color:#d4d4d4">=</span> <span style="color:#9cdcfe">http</span><span style="color:#d4d4d4">.</span><span style="color:#dcdcaa">createServer</span><span style="color:#d4d4d4">(</span><span style="color:#9cdcfe">app</span><span style="color:#d4d4d4">.</span><span style="color:#dcdcaa">callback</span><span style="color:#d4d4d4">(</span><span style="color:#d4d4d4">)</span><span style="color:#d4d4d4">)</span><span style="color:#d4d4d4">;</span></div>
<div class="t" style="left:0;top:91.5px;font:bold 3.334px/4px 'Liberation Mono',monospace;opacity:0.9"><span style="color:#6a9955">/**</span></div>
<div class="t" style="left:0;top:95.5px;font:bold 3.334px/4px 'Liberation Mono',monospace;opacity:0.9"> <span style="color:#6a9955">* Listen on provided port, on all network interfaces.</span></div>
<div class="t" style="left:0;top:99.5px;font:bold 3.334px/4px 'Liberation Mono',monospace;opacity:0.9"> <span style="color:#6a9955">*/</span></div>
<div class="t" style="left:0;top:107.5px;font:bold 3.334px/4px 'Liberation Mono',monospace;opacity:0.9"><span style="color:#9cdcfe">server</span><span style="color:#d4d4d4">.</span><span style="color:#dcdcaa">listen</span><span style="color:#d4d4d4">(</span><span style="color:#9cdcfe">port</span><span style="color:#d4d4d4">)</span><span style="color:#d4d4d4">;</span></div>
<div class="t" style="left:0;top:111.5px;font:bold 3.334px/4px 'Liberation Mono',monospace;opacity:0.9"><span style="color:#9cdcfe">server</span><span style="color:#d4d4d4">.</span><span style="color:#dcdcaa">on</span><span style="color:#d4d4d4">(</span><span style="color:#ce9178">&#x27;error&#x27;</span><span style="color:#d4d4d4">,</span> <span style="color:#9cdcfe">onError</span><span style="color:#d4d4d4">)</span><span style="color:#d4d4d4">;</span></div>
<div class="t" style="left:0;top:115.5px;font:bold 3.334px/4px 'Liberation Mono',monospace;opacity:0.9"><span style="color:#9cdcfe">server</span><span style="color:#d4d4d4">.</span><span style="color:#dcdcaa">on</span><span style="color:#d4d4d4">(</span><span style="color:#ce9178">&#x27;listening&#x27;</span><span style="color:#d4d4d4">,</span> <span style="color:#9cdcfe">onListening</span><span style="color:#d4d4d4">)</span><span style="color:#d4d4d4">;</span></div>
<div class="t" style="left:0;top:123.5px;font:bold 3.334px/4px 'Liberation Mono',monospace;opacity:0.9"><span style="color:#6a9955">/**</span></div>
<div class="t" style="left:0;top:127.5px;font:bold 3.334px/4px 'Liberation Mono',monospace;opacity:0.9"> <span style="color:#6a9955">* Normalize a port into a number, string, or false.</span></div>
<div class="t" style="left:0;top:131.5px;font:bold 3.334px/4px 'Liberation Mono',monospace;opacity:0.9"> <span style="color:#6a9955">*/</span></div>
<div class="t" style="left:0;top:139.5px;font:bold 3.334px/4px 'Liberation Mono',monospace;opacity:0.9"><span style="color:#569cd6">function</span> <span style="color:#dcdcaa">normalizePort</span><span style="color:#d4d4d4">(</span><span style="color:#9cdcfe">val</span><span style="color:#d4d4d4">)</span> <span style="color:#d4d4d4">{</span></div>
<div class="t" style="left:0;top:143.5px;font:bold 3.334px/4px 'Liberation Mono',monospace;opacity:0.9">  <span style="color:#569cd6">var</span> <span style="color:#9cdcfe">port</span> <span style="color:#d4d4d4">=</span> <span style="color:#dcdcaa">parseInt</span><span style="color:#d4d4d4">(</span><span style="color:#9cdcfe">val</span><span style="color:#d4d4d4">,</span> <span style="color:#b5cea8">10</span><span style="color:#d4d4d4">)</span><span style="color:#d4d4d4">;</span></div>
<div class="t" style="left:0;top:151.5px;font:bold 3.334px/4px 'Liberation Mono',monospace;opacity:0.9">  <span style="color:#c586c0">if</span> <span style="color:#d4d4d4">(</span><span style="color:#dcdcaa">isNaN</span><span style="color:#d4d4d4">(</span><span style="color:#9cdcfe">port</span><span style="color:#d4d4d4">)</span><span style="color:#d4d4d4">)</span> <span style="color:#d4d4d4">{</span></div>
<div class="t" style="left:0;top:155.5px;font:bold 3.334px/4px 'Liberation Mono',monospace;opacity:0.9">    <span style="color:#6a9955">// named pipe</span></div>
<div class="t" style="left:0;top:159.5px;font:bold 3.334px/4px 'Liberation Mono',monospace;opacity:0.9">    <span style="color:#c586c0">return</span> <span style="color:#9cdcfe">val</span><span style="color:#d4d4d4">;</span></div>
<div class="t" style="left:0;top:163.5px;font:bold 3.334px/4px 'Liberation Mono',monospace;opacity:0.9">  <span style="color:#d4d4d4">}</span></div>
<div class="t" style="left:0;top:171.5px;font:bold 3.334px/4px 'Liberation Mono',monospace;opacity:0.9">  <span style="color:#c586c0">if</span> <span style="color:#d4d4d4">(</span><span style="color:#9cdcfe">port</span> <span style="color:#d4d4d4">&gt;</span><span style="color:#d4d4d4">=</span> <span style="color:#b5cea8">0</span><span style="color:#d4d4d4">)</span> <span style="color:#d4d4d4">{</span></div>
<div class="t" style="left:0;top:175.5px;font:bold 3.334px/4px 'Liberation Mono',monospace;opacity:0.9">    <span style="color:#6a9955">// port number</span></div>
<div class="t" style="left:0;top:179.5px;font:bold 3.334px/4px 'Liberation Mono',monospace;opacity:0.9">    <span style="color:#c586c0">return</span> <span style="color:#9cdcfe">port</span><span style="color:#d4d4d4">;</span></div>
<div class="t" style="left:0;top:183.5px;font:bold 3.334px/4px 'Liberation Mono',monospace;opacity:0.9">  <span style="color:#d4d4d4">}</span></div>
<div class="t" style="left:0;top:191.5px;font:bold 3.334px/4px 'Liberation Mono',monospace;opacity:0.9">  <span style="color:#c586c0">return</span> <span style="color:#9cdcfe">false</span><span style="color:#d4d4d4">;</span></div>
<div class="t" style="left:0;top:195.5px;font:bold 3.334px/4px 'Liberation Mono',monospace;opacity:0.9"><span style="color:#d4d4d4">}</span></div>
<div class="t" style="left:0;top:203.5px;font:bold 3.334px/4px 'Liberation Mono',monospace;opacity:0.9"><span style="color:#6a9955">/**</span></div>
<div class="t" style="left:0;top:207.5px;font:bold 3.334px/4px 'Liberation Mono',monospace;opacity:0.9"> <span style="color:#6a9955">* Event listener for HTTP server &quot;error&quot; event.</span></div>
<div class="t" style="left:0;top:211.5px;font:bold 3.334px/4px 'Liberation Mono',monospace;opacity:0.9"> <span style="color:#6a9955">*/</span></div>
<div class="t" style="left:0;top:219.5px;font:bold 3.334px/4px 'Liberation Mono',monospace;opacity:0.9"><span style="color:#569cd6">function</span> <span style="color:#dcdcaa">onError</span><span style="color:#d4d4d4">(</span><span style="color:#9cdcfe">error</span><span style="color:#d4d4d4">)</span> <span style="color:#d4d4d4">{</span></div>
<div class="t" style="left:0;top:223.5px;font:bold 3.334px/4px 'Liberation Mono',monospace;opacity:0.9">  <span style="color:#c586c0">if</span> <span style="color:#d4d4d4">(</span><span style="color:#9cdcfe">error</span><span style="color:#d4d4d4">.</span><span style="color:#9cdcfe">syscall</span> <span style="color:#d4d4d4">!</span><span style="color:#d4d4d4">=</span><span style="color:#d4d4d4">=</span> <span style="color:#ce9178">&#x27;listen&#x27;</span><span style="color:#d4d4d4">)</span> <span style="color:#d4d4d4">{</span></div>
<div class="t" style="left:0;top:227.5px;font:bold 3.334px/4px 'Liberation Mono',monospace;opacity:0.9">    <span style="color:#c586c0">throw</span> <span style="color:#9cdcfe">error</span><span style="color:#d4d4d4">;</span></div>
<div class="t" style="left:0;top:231.5px;font:bold 3.334px/4px 'Liberation Mono',monospace;opacity:0.9">  <span style="color:#d4d4d4">}</span></div>
<div class="t" style="left:0;top:239.5px;font:bold 3.334px/4px 'Liberation Mono',monospace;opacity:0.9">  <span style="color:#569cd6">var</span> <span style="color:#9cdcfe">bind</span> <span style="color:#d4d4d4">=</span> <span style="color:#569cd6">typeof</span> <span style="color:#9cdcfe">port</span> <span style="color:#d4d4d4">=</span><span style="color:#d4d4d4">=</span><span style="color:#d4d4d4">=</span> <span style="color:#ce9178">&#x27;string&#x27;</span></div>
<div class="t" style="left:0;top:243.5px;font:bold 3.334px/4px 'Liberation Mono',monospace;opacity:0.9">    <span style="color:#d4d4d4">?</span> <span style="color:#ce9178">&#x27;Pipe &#x27;</span> <span style="color:#d4d4d4">+</span> <span style="color:#9cdcfe">port</span></div>
<div class="t" style="left:0;top:247.5px;font:bold 3.334px/4px 'Liberation Mono',monospace;opacity:0.9">    <span style="color:#d4d4d4">:</span> <span style="color:#ce9178">&#x27;Port &#x27;</span> <span style="color:#d4d4d4">+</span> <span style="color:#9cdcfe">port</span><span style="color:#d4d4d4">;</span></div>
<div class="t" style="left:0;top:255.5px;font:bold 3.334px/4px 'Liberation Mono',monospace;opacity:0.9">  <span style="color:#6a9955">// handle specific listen errors with friendly messages</span></div>
<div class="t" style="left:0;top:259.5px;font:bold 3.334px/4px 'Liberation Mono',monospace;opacity:0.9">  <span style="color:#c586c0">switch</span> <span style="color:#d4d4d4">(</span><span style="color:#9cdcfe">error</span><span style="color:#d4d4d4">.</span><span style="color:#9cdcfe">code</span><span style="color:#d4d4d4">)</span> <span style="color:#d4d4d4">{</span></div>
<div class="t" style="left:0;top:263.5px;font:bold 3.334px/4px 'Liberation Mono',monospace;opacity:0.9">    <span style="color:#c586c0">case</span> <span style="color:#ce9178">&#x27;EACCES&#x27;</span><span style="color:#d4d4d4">:</span></div>
<div class="t" style="left:0;top:267.5px;font:bold 3.334px/4px 'Liberation Mono',monospace;opacity:0.9">      <span style="color:#9cdcfe">console</span><span style="color:#d4d4d4">.</span><span style="color:#dcdcaa">error</span><span style="color:#d4d4d4">(</span><span style="color:#9cdcfe">bind</span> <span style="color:#d4d4d4">+</span> <span style="color:#ce9178">&#x27; requires elevated privileges&#x27;</span><span style="color:#d4d4d4">)</span><span style="color:#d4d4d4">;</span></div>
<div class="t" style="left:0;top:271.5px;font:bold 3.334px/4px 'Liberation Mono',monospace;opacity:0.9">      <span style="color:#9cdcfe">process</span><span style="color:#d4d4d4">.</span><span style="color:#dcdcaa">exit</span><span style="color:#d4d4d4">(</span><span style="color:#b5cea8">1</span><span style="color:#d4d4d4">)</span><span style="color:#d4d4d4">;</span></div>
<div class="t" style="left:0;top:275.5px;font:bold 3.334px/4px 'Liberation Mono',monospace;opacity:0.9">      <span style="color:#c586c0">break</span><span style="color:#d4d4d4">;</span></div>
<div class="t" style="left:0;top:279.5px;font:bold 3.334px/4px 'Liberation Mono',monospace;opacity:0.9">    <span style="color:#c586c0">case</span> <span style="color:#ce9178">&#x27;EADDRINUSE&#x27;</span><span style="color:#d4d4d4">:</span></div>
<div class="t" style="left:0;top:283.5px;font:bold 3.334px/4px 'Liberation Mono',monospace;opacity:0.9">      <span style="color:#9cdcfe">console</span><span style="color:#d4d4d4">.</span><span style="color:#dcdcaa">error</span><span style="color:#d4d4d4">(</span><span style="color:#9cdcfe">bind</span> <span style="color:#d4d4d4">+</span> <span style="color:#ce9178">&#x27; is already in use&#x27;</span><span style="color:#d4d4d4">)</span><span style="color:#d4d4d4">;</span></div>
<div class="t" style="left:0;top:287.5px;font:bold 3.334px/4px 'Liberation Mono',monospace;opacity:0.9">      <span style="color:#9cdcfe">process</span><span style="color:#d4d4d4">.</span><span style="color:#dcdcaa">exit</span><span style="color:#d4d4d4">(</span><span style="color:#b5cea8">1</span><span style="color:#d4d4d4">)</span><span style="color:#d4d4d4">;</span></div>
<div class="t" style="left:0;top:291.5px;font:bold 3.334px/4px 'Liberation Mono',monospace;opacity:0.9">      <span style="color:#c586c0">break</span><span style="color:#d4d4d4">;</span></div>
<div class="t" style="left:0;top:295.5px;font:bold 3.334px/4px 'Liberation Mono',monospace;opacity:0.9">    <span style="color:#c586c0">default</span><span style="color:#d4d4d4">:</span></div>
<div class="t" style="left:0;top:299.5px;font:bold 3.334px/4px 'Liberation Mono',monospace;opacity:0.9">      <span style="color:#c586c0">throw</span> <span style="color:#9cdcfe">error</span><span style="color:#d4d4d4">;</span></div>
<div class="t" style="left:0;top:303.5px;font:bold 3.334px/4px 'Liberation Mono',monospace;opacity:0.9">  <span style="color:#d4d4d4">}</span></div>
<div class="t" style="left:0;top:307.5px;font:bold 3.334px/4px 'Liberation Mono',monospace;opacity:0.9"><span style="color:#d4d4d4">}</span></div>
<div class="t" style="left:0;top:315.5px;font:bold 3.334px/4px 'Liberation Mono',monospace;opacity:0.9"><span style="color:#6a9955">/**</span></div>
<div class="t" style="left:0;top:319.5px;font:bold 3.334px/4px 'Liberation Mono',monospace;opacity:0.9"> <span style="color:#6a9955">* Event listener for HTTP server &quot;listening&quot; event.</span></div>
<div class="t" style="left:0;top:323.5px;font:bold 3.334px/4px 'Liberation Mono',monospace;opacity:0.9"> <span style="color:#6a9955">*/</span></div>
<div class="t" style="left:0;top:331.5px;font:bold 3.334px/4px 'Liberation Mono',monospace;opacity:0.9"><span style="color:#569cd6">function</span> <span style="color:#dcdcaa">onListening</span><span style="color:#d4d4d4">(</span><span style="color:#d4d4d4">)</span> <span style="color:#d4d4d4">{</span></div>
<div class="t" style="left:0;top:335.5px;font:bold 3.334px/4px 'Liberation Mono',monospace;opacity:0.9">  <span style="color:#569cd6">var</span> <span style="color:#9cdcfe">addr</span> <span style="color:#d4d4d4">=</span> <span style="color:#9cdcfe">server</span><span style="color:#d4d4d4">.</span><span style="color:#dcdcaa">address</span><span style="color:#d4d4d4">(</span><span style="color:#d4d4d4">)</span><span style="color:#d4d4d4">;</span></div>
<div class="t" style="left:0;top:339.5px;font:bold 3.334px/4px 'Liberation Mono',monospace;opacity:0.9">  <span style="color:#569cd6">var</span> <span style="color:#9cdcfe">bind</span> <span style="color:#d4d4d4">=</span> <span style="color:#569cd6">typeof</span> <span style="color:#9cdcfe">addr</span> <span style="color:#d4d4d4">=</span><span style="color:#d4d4d4">=</span><span style="color:#d4d4d4">=</span> <span style="color:#ce9178">&#x27;string&#x27;</span></div>
<div class="t" style="left:0;top:343.5px;font:bold 3.334px/4px 'Liberation Mono',monospace;opacity:0.9">    <span style="color:#d4d4d4">?</span> <span style="color:#ce9178">&#x27;pipe &#x27;</span> <span style="color:#d4d4d4">+</span> <span style="color:#9cdcfe">addr</span></div>
<div class="t" style="left:0;top:347.5px;font:bold 3.334px/4px 'Liberation Mono',monospace;opacity:0.9">    <span style="color:#d4d4d4">:</span> <span style="color:#ce9178">&#x27;port &#x27;</span> <span style="color:#d4d4d4">+</span> <span style="color:#9cdcfe">addr</span><span style="color:#d4d4d4">.</span><span style="color:#9cdcfe">port</span><span style="color:#d4d4d4">;</span></div>
<div class="t" style="left:0;top:351.5px;font:bold 3.334px/4px 'Liberation Mono',monospace;opacity:0.9">  <span style="color:#dcdcaa">debug</span><span style="color:#d4d4d4">(</span><span style="color:#ce9178">&#x27;Listening on &#x27;</span> <span style="color:#d4d4d4">+</span> <span style="color:#9cdcfe">bind</span><span style="color:#d4d4d4">)</span><span style="color:#d4d4d4">;</span></div>
<div class="t" style="left:0;top:355.5px;font:bold 3.334px/4px 'Liberation Mono',monospace;opacity:0.9"><span style="color:#d4d4d4">}</span></div>
</div>
<div class="a" style="left:2493px;top:128px;width:1px;height:1017px;background:#3a3a3a;"></div>
<div class="a" style="left:2494px;top:247px;width:19px;height:5px;background:#a0a0a0;"></div>
<div class="a" style="left:805px;top:1146px;width:558px;height:3px;background:#e7e7e7;"></div>
<svg class="a" style="left:606px;top:1168px;" width="22" height="22" viewBox="0 0 22 22"><circle cx="11" cy="11" r="10.5" fill="#c5c5c5"/><path d="M11 4.5 v8" stroke="#1e1e1e" stroke-width="3"/><circle cx="11" cy="16" r="1.7" fill="#1e1e1e"/></svg>
<div class="t" style="left:638.46px;top:1165.59px;font-size:26px;line-height:26px;color:#969696;font-family:'Liberation Sans',sans-serif;">Problems</div>
<svg class="a" style="left:822px;top:1170px;" width="26" height="20" viewBox="0 0 26 20"><path d="M2 4 L8 9.5 L2 15" stroke="#e7e7e7" stroke-width="2" fill="none"/><path d="M11 17 h13" stroke="#e7e7e7" stroke-width="2"/></svg>
<div class="t" style="left:855.96px;top:1165.59px;font-size:26px;line-height:26px;color:#e7e7e7;font-family:'Liberation Sans',sans-serif;">user@expgam-machine: ~/lesson/login</div>
<svg class="a" style="left:1324px;top:1171px;" width="18" height="18" viewBox="0 0 18 18"><path d="M2 2 L16 16 M16 2 L2 16" stroke="#e7e7e7" stroke-width="2.2"/></svg>
<svg class="a" style="left:2459px;top:1165px;" width="28" height="26" viewBox="0 0 28 26"><rect x="2" y="2" width="24" height="22" rx="2" stroke="#e7e7e7" stroke-width="2.6" fill="none"/><path d="M14 3 v20" stroke="#e7e7e7" stroke-width="2.2"/></svg>
<div class="t" style="left:598.5px;top:1257.55px;font:28px/28px 'Liberation Mono',monospace;letter-spacing:0.197px"><span style="color:#cccccc;">&gt; login@0.1.0 start /home/user/lesson/login</span></div>
<div class="t" style="left:598.5px;top:1291.55px;font:28px/28px 'Liberation Mono',monospace;letter-spacing:0.197px"><span style="color:#cccccc;">&gt; node bin/www</span></div>
<div class="t" style="left:598.5px;top:1359.55px;font:28px/28px 'Liberation Mono',monospace;letter-spacing:0.197px"><span style="color:#767676;">  &lt;--</span><span style="color:#cccccc;"> </span><span style="color:#e5e5e5;font-weight:bold;">GET</span><span style="color:#767676;"> /</span></div>
<div class="t" style="left:598.5px;top:1393.55px;font:28px/28px 'Liberation Mono',monospace;letter-spacing:0.197px"><span style="color:#cccccc;">GET / - 315ms</span></div>
<div class="t" style="left:598.5px;top:1427.55px;font:28px/28px 'Liberation Mono',monospace;letter-spacing:0.197px"><span style="color:#767676;">  --&gt;</span><span style="color:#cccccc;"> </span><span style="color:#e5e5e5;font-weight:bold;">GET</span><span style="color:#767676;"> / </span><span style="color:#23d18b;">200</span><span style="color:#767676;"> 325ms 323b</span></div>
<div class="t" style="left:598.5px;top:1461.55px;font:28px/28px 'Liberation Mono',monospace;letter-spacing:0.197px"><span style="color:#767676;">  &lt;--</span><span style="color:#cccccc;"> </span><span style="color:#e5e5e5;font-weight:bold;">GET</span><span style="color:#767676;"> /stylesheets/style.css</span></div>
<div class="t" style="left:598.5px;top:1495.55px;font:28px/28px 'Liberation Mono',monospace;letter-spacing:0.197px"><span style="color:#767676;">  --&gt;</span><span style="color:#cccccc;"> </span><span style="color:#e5e5e5;font-weight:bold;">GET</span><span style="color:#767676;"> /stylesheets/style.css </span><span style="color:#23d18b;">200</span><span style="color:#767676;"> 4ms 111b</span></div>
<div class="t" style="left:598.5px;top:1529.55px;font:28px/28px 'Liberation Mono',monospace;letter-spacing:0.197px"><span style="color:#767676;">  &lt;--</span><span style="color:#cccccc;"> </span><span style="color:#e5e5e5;font-weight:bold;">GET</span><span style="color:#767676;"> /favicon.ico</span></div>
<div class="t" style="left:598.5px;top:1563.55px;font:28px/28px 'Liberation Mono',monospace;letter-spacing:0.197px"><span style="color:#cccccc;">GET /favicon.ico - 0ms</span></div>
<div class="t" style="left:598.5px;top:1597.55px;font:28px/28px 'Liberation Mono',monospace;letter-spacing:0.197px"><span style="color:#767676;">  --&gt;</span><span style="color:#cccccc;"> </span><span style="color:#e5e5e5;font-weight:bold;">GET</span><span style="color:#767676;"> /favicon.ico </span><span style="color:#e5e510;">404</span><span style="color:#767676;"> 2ms -</span></div>
<div class="a" style="left:599px;top:1630px;width:17px;height:34px;border:2px solid #e5e5e5"></div>
<div class="t" style="left:2550.94px;top:85.02px;font-size:21.6px;line-height:21.6px;color:#e7e7e7;font-family:'Liberation Sans',sans-serif;">PORT EXTERNAL ACCESS</div>
<div class="a" style="left:2675px;top:128px;width:130px;height:47px;background:#0e639c;box-shadow:0 2px 4px rgba(0,0,0,0.5)"></div>
<div class="t" style="left:2692.52px;top:138.36px;font-size:27px;line-height:27px;color:#ffffff;font-family:'Liberation Sans',sans-serif;">Register</div>
<div class="a" style="left:2832px;top:128px;width:130px;height:47px;background:#0e639c;box-shadow:0 2px 4px rgba(0,0,0,0.5)"></div>
<div class="t" style="left:2849.92px;top:138.36px;font-size:27px;line-height:27px;color:#ffffff;font-family:'Liberation Sans',sans-serif;">Refresh</div>
<div class="a" style="left:2525px;top:187px;width:436px;height:157px;background:#1e1e1e;"></div>
<div class="t" style="left:2534.93px;top:197.81px;font-size:26.8px;line-height:26.8px;color:#cccccc;font-family:'Liberation Sans',sans-serif;">Port: 8001</div>
<div class="t" style="left:2534.93px;top:238.21px;font-size:26.8px;line-height:26.8px;color:#cccccc;font-family:'Liberation Sans',sans-serif;">Protocol: http</div>
<div class="t" style="left:2753.92px;top:238.04px;font-size:27px;line-height:27px;color:#cccccc;font-family:'Liberation Sans',sans-serif;">Remainder: 29mi</div>
<div class="a" style="left:2634px;top:287px;width:162px;height:47px;background:#0e639c;box-shadow:0 2px 4px rgba(0,0,0,0.5)"></div>
<div class="a" style="left:2763px;top:287px;width:1px;height:47px;background:#0b4f7d;"></div>
<div class="t" style="left:2656.44px;top:298.65px;font-size:26.4px;line-height:26.4px;color:#ffffff;font-family:'Liberation Sans',sans-serif;">Access</div>
<svg class="a" style="left:2769px;top:301px;" width="22" height="16" viewBox="0 0 22 16"><path d="M3.5 3.5 L11 11 L18.5 3.5" stroke="#ffffff" stroke-width="4.6" fill="none"/></svg>
<div class="a" style="left:2823px;top:287px;width:135px;height:47px;background:#0e639c;box-shadow:0 2px 4px rgba(0,0,0,0.5)"></div>
<div class="t" style="left:2840.63px;top:297.46px;font-size:26.8px;line-height:26.8px;color:#ffffff;font-family:'Liberation Sans',sans-serif;">Remove</div>
<svg class="a" style="left:2990px;top:88px;" width="60" height="156" viewBox="0 0 60 156"><g transform="translate(-2990,-88)"><g fill="#858585"><rect x="2997.5" y="94.1" width="6" height="6"/><rect x="3007.3" y="94.1" width="35.8" height="6"/><rect x="2997.5" y="104" width="6" height="6"/><rect x="3007.3" y="104" width="35.8" height="6"/><rect x="2997.5" y="114" width="6" height="6"/><rect x="3007.3" y="114" width="35.8" height="6"/><rect x="2997.5" y="123.6" width="6" height="6"/><rect x="3007.3" y="123.6" width="35.8" height="6"/></g>
<path d="M3014.3 194.2 H3001 a2.2 2.2 0 0 0 -2.2 2.2 V227 a2.2 2.2 0 0 0 2.2 2.2 H3016.5 L3021.5 235.5 L3026.5 229.2 H3042.3 a2.2 2.2 0 0 0 2.2 -2.2 V196.4 a2.2 2.2 0 0 0 -2.2 -2.2 H3021.5 a1.5 1.5 0 0 0 -0.1 0.1 V225" stroke="#858585" stroke-width="3" fill="none" stroke-linejoin="round"/>
<path d="M3003.2 203.8 H3016.7 M3003.2 212.3 H3016.7 M3003.2 220.5 H3016.7 M3026.7 220.5 H3040.2" stroke="#858585" stroke-width="3"/>
<rect x="3026.7" y="202.7" width="13.5" height="11.1" fill="#858585"/></g></svg>
<svg class="a" style="left:2990px;top:280px;" width="60" height="64" viewBox="0 0 60 64"><g transform="translate(-2990,-280)"><path d="M3013.4 297.2 V318 L3036.3 294 M3013.4 318 L3027.6 334.2" stroke="#fff" stroke-width="2.8" fill="none"/><circle cx="3013.4" cy="317.9" r="11.3" fill="#fff"/><circle cx="3013.4" cy="297.2" r="4" fill="#fff"/><circle cx="3036.3" cy="294" r="4.4" fill="#fff"/><circle cx="3027.6" cy="334.2" r="4.4" fill="#fff"/></g></svg>
<div class="a" style="left:3068px;top:263px;width:4px;height:100px;background:#1567ab;"></div>
<svg class="a" style="left:29px;top:1698px;" width="22" height="22" viewBox="0 0 22 22"><circle cx="11" cy="11" r="10.5" fill="#fff"/><path d="M6.8 6.8 L15.2 15.2 M15.2 6.8 L6.8 15.2" stroke="#007acc" stroke-width="3"/></svg>
<div class="t" style="left:56.04px;top:1696.68px;font-size:24px;line-height:24px;color:#ffffff;font-family:'Liberation Sans',sans-serif;">0</div>
<svg class="a" style="left:76px;top:1697px;" width="25" height="23" viewBox="0 0 25 23"><path d="M12.5 1 L24.5 22 H0.5 Z" fill="#fff" stroke="#fff" stroke-width="1" stroke-linejoin="round"/><path d="M12.5 7.5 v8" stroke="#007acc" stroke-width="3"/><circle cx="12.5" cy="18.8" r="1.6" fill="#007acc"/></svg>
<div class="t" style="left:106.04px;top:1696.68px;font-size:24px;line-height:24px;color:#ffffff;font-family:'Liberation Sans',sans-serif;">0</div>
<div class="t" style="left:2403.67px;top:1697.28px;font-size:23.3px;line-height:23.3px;color:#ffffff;font-family:'Liberation Sans',sans-serif;">Ln 15, Col 51</div>
<div class="t" style="left:2566.04px;top:1696.68px;font-size:24px;line-height:24px;color:#ffffff;font-family:'Liberation Sans',sans-serif;">LF</div>
<div class="t" style="left:2615.04px;top:1696.68px;font-size:24px;line-height:24px;color:#ffffff;font-family:'Liberation Sans',sans-serif;">UTF-8</div>
<div class="t" style="left:2702.80px;top:1697.87px;font-size:22.6px;line-height:22.6px;color:#ffffff;font-family:'Liberation Sans',sans-serif;">Spaces: 4</div>
<div class="t" style="left:2826.94px;top:1696.68px;font-size:24px;line-height:24px;color:#ffffff;font-family:'Liberation Sans',sans-serif;">JavaScript</div>
<svg class="a" style="left:2963px;top:1697px;" width="24" height="26" viewBox="0 0 24 26"><path d="M12 2 a7.5 7.5 0 0 1 7.5 7.5 v6 l3 4 h-21 l3 -4 v-6 a7.5 7.5 0 0 1 7.5 -7.5z" fill="#fff"/><path d="M9 21.5 a3 3 0 0 0 6 0z" fill="#fff"/></svg>
<svg class="a" style="left:3017px;top:1699px;" width="26" height="20" viewBox="0 0 26 20"><rect x="1.5" y="1.5" width="23" height="17" stroke="#fff" stroke-width="3" fill="none"/><rect x="1.5" y="1.5" width="23" height="5" fill="#fff"/></svg>
<svg class="a" style="left:2810px;top:1625px;" width="240" height="60" viewBox="0 0 2576 644"><g stroke="#8c8c8c" stroke-width="30" fill="none">
<path d="M260 150 L140 275 M215 215 V370 M370 150 V315 Q370 345 405 345 H500 Q525 345 525 290 M500 185 L270 300 M135 430 H535 M335 370 V545"/>
<path d="M650 155 L710 215 M615 262 H960 V490 Q960 525 925 525 H815 M800 150 Q795 420 610 540 M830 360 L880 420"/>
<path d="M1095 180 H1425 M1060 310 H1460 M1225 320 L1095 500 L1400 480 M1320 385 L1430 515"/>
<path d="M1570 150 L1600 190 M1525 240 H1640 L1520 390 M1590 300 V545 M1625 355 L1665 395 M1675 280 H1910 M1785 140 V520 M1655 520 H1925"/>
<path d="M2370 180 H2020 V510 H2375 M2075 455 L2315 230 M2110 250 L2330 460"/>
</g></svg>
<div class="a" style="left:2401px;top:97px;width:298px;height:42px;background:#ffffff;box-shadow:0 0 3px rgba(0,0,0,0.3)"></div>
<svg class="a" style="left:2401px;top:97px;" width="42" height="42" viewBox="0 0 42 42"><defs><linearGradient id="al" x1="0" y1="0" x2="1" y2="1"><stop offset="0" stop-color="#d9b3b8"/><stop offset="0.5" stop-color="#b58a90"/><stop offset="1" stop-color="#6b4a4e"/></linearGradient></defs>
<filter id="bl"><feGaussianBlur stdDeviation="1.4"/></filter><g filter="url(#bl)"><rect x="-3" y="-3" width="48" height="48" fill="url(#al)"/><rect x="24" y="0" width="8" height="42" fill="#d8b8bc" opacity="0.6"/><path d="M8 30 L20 16 L27 36 L16 44 Z" fill="#3c2a2c" opacity="0.75"/><circle cx="33" cy="38" r="7" fill="#d8553a"/><circle cx="9" cy="29" r="4.5" fill="#f0b030"/></g></svg>
<svg class="a" style="left:2464px;top:108px;" width="24" height="12" viewBox="0 0 24 12"><g stroke="#3a3a3a" stroke-width="1.05" fill="none"><path transform="translate(0.0,0) scale(1.05)" d="M0.5 1.5 H5 M1 3 H4.5 M4.5 1.5 V5 M0.5 5 H5.5 M2.5 1.5 L1 9 M2 6.5 H4.5 V9 H2 Z M6 1 L7 2.5 M9.5 1 L8.5 2.5 M6 3 H9.8 M6 5 H9.8 M5.5 7 H10 M8 3 V10"/><path transform="translate(11.2,0) scale(1.05)" d="M2.5 0.5 H7.5 V4 H2.5 Z M2.5 2.2 H7.5 M3 5 L2 7 M2.5 6 H8 M3 7.8 H7.5 M5 5 V9.5 M1 9.5 H9"/></g></svg>
<div class="a" style="left:2487px;top:113px;width:5px;height:1.5px;background:#3a3a3a;"></div>
<svg class="a" style="left:2494px;top:108px;" width="24" height="12" viewBox="0 0 24 12"><g stroke="#3a3a3a" stroke-width="1.05" fill="none"><path transform="translate(0.0,0) scale(1.05)" d="M2.5 0.5 L0.5 4.5 M1.8 3 V10 M4 1.5 H9.5 M4 1.5 V5.5 L3.3 10 M4 3.2 H9.5 V5 H4 M4.5 6.5 H9.5 V10 M5.8 6.5 V10 M7.5 6.5 V10 M4.5 8.2 H9.5"/><path transform="translate(11.2,0) scale(1.05)" d="M8.5 0.5 L1.5 2 M2.5 2.5 L3 4 M5 2.2 L5.3 3.8 M8 2.2 L7 4 M0.8 5 V4.2 H9.2 V5 M2.5 5.5 H7.5 L3 10 M2.8 6 L8.5 10"/></g></svg>
<svg class="a" style="left:2518px;top:107px;" width="5" height="13" viewBox="0 0 5 13"><path d="M4 1 Q1 6 4 12" stroke="#3a3a3a" stroke-width="1.2" fill="none"/></svg>
<svg class="a" style="left:2522px;top:108px;" width="58" height="12" viewBox="0 0 58 12"><g stroke="#3a3a3a" stroke-width="1.05" fill="none"><path transform="translate(0.0,0) scale(1.05)" d="M0.5 3 H3 V7.5 H0.5 Z M5.5 0.5 L4 4 M5 2.5 V10 M6.5 0.5 L7.2 1.8 M5 2.5 H9.5 M5 5 H9 M5 7.3 H9 M5 9.5 H9.8 M7.5 2.5 V9.5"/><path transform="translate(11.2,0) scale(1.05)" d="M3 0.3 L3.8 1.5 M7 0.3 L6.2 1.5 M1.5 2 H8.5 M2 3.8 H8 M1 5.5 H9 M5 2 V6.5 M1 7 H9 M5 6.5 L1.5 10 M5 7.5 L9 10"/><path transform="translate(22.4,0) scale(1.05)" d="M2 0.5 L0.5 3 M1 3 H3.5 M1 5 H3.5 M2.2 3 V9.5 L3.8 8.5 M4.5 1 H9.5 V10 L8.5 9.5 M4.5 1 V10 M5.5 3 L8.5 8 M8.5 3 L5.5 8"/><path transform="translate(33.6,0) scale(1.05)" d="M0.5 1 H4 M0.8 2.7 H3.8 M2.3 1 V4.5 L0.5 5 M5.5 1 H9.5 M5.8 2.7 H9.2 M7.5 1 V4.5 L9.5 5 M5 5 L1 8 M5 5 L9 8 M2.5 7.5 H7.5 L6 10"/><path transform="translate(44.8,0) scale(1.05)" d="M1.5 0.5 V10 M1.5 3.5 H4 M1.5 6 H4.5 V10 M5.2 1 H9.5 M5.2 1 V6 L4.5 10 M5.5 4 H9 L6 10 M6.5 5 L9.5 10"/></g></svg>
<svg class="a" style="left:2579px;top:115px;" width="12" height="3" viewBox="0 0 12 3"><circle cx="1.5" cy="1.5" r="1" fill="#555"/><circle cx="5.5" cy="1.5" r="1" fill="#555"/><circle cx="9.5" cy="1.5" r="1" fill="#555"/></svg>
<svg class="a" style="left:2515px;top:127px;" width="23" height="12" viewBox="0 0 23 12"><g stroke="#5a5a5a" stroke-width="1.0" fill="none"><path transform="translate(0.0,0) scale(1.0)" d="M0.5 2.2 H9.5 M5 0.3 V5 M5 2.5 L1 5.5 M5 2.5 L9 5.5 M2 6 H8 L5.5 7.5 M5 7.5 V10 L4 9.5 M0.8 8 H9.2"/><path transform="translate(10.5,0) scale(1.0)" d="M2.5 0.5 L1.2 5 L4.5 9.5 M4 3 L1 10 M0.5 3 H4.5 M5.5 1 H9 L7.3 3.5 M7.3 3.5 V10 L6.5 9.5 M5 5 H9.8"/></g></svg>
<svg class="a" style="left:2611px;top:111px;" width="17" height="14" viewBox="0 0 17 14"><path d="M8.5 13 L2 6.5 A3.4 3.4 0 0 1 8.5 2.5 A3.4 3.4 0 0 1 15 6.5 Z" stroke="#8a8a8a" stroke-width="1.3" fill="none"/></svg>
<svg class="a" style="left:2637px;top:110px;" width="17" height="16" viewBox="0 0 17 16"><path d="M1 5.5 h3.5 l5 -4.5 v14 l-5 -4.5 h-3.5z" fill="#8a8a8a"/><path d="M12 5 q2 3 0 6 M14 3 q4 5 0 10" stroke="#8a8a8a" stroke-width="1.3" fill="none"/></svg>
<svg class="a" style="left:2661px;top:111px;" width="16" height="14" viewBox="0 0 16 14"><path d="M1 2 h2 M5 2 h10 M1 7 h2 M5 7 h10 M1 12 h2 M5 12 h10" stroke="#8a8a8a" stroke-width="1.3"/></svg>
<svg class="a" style="left:2684px;top:102px;" width="10" height="10" viewBox="0 0 10 10"><path d="M1 1 L9 9 M9 1 L1 9" stroke="#b0b0b0" stroke-width="1.2"/></svg>
<svg class="a" style="left:2684px;top:115px;" width="10" height="8" viewBox="0 0 10 8"><rect x="1" y="1" width="8" height="6" stroke="#c0c0c0" stroke-width="1" fill="none"/></svg>
</body></html>
